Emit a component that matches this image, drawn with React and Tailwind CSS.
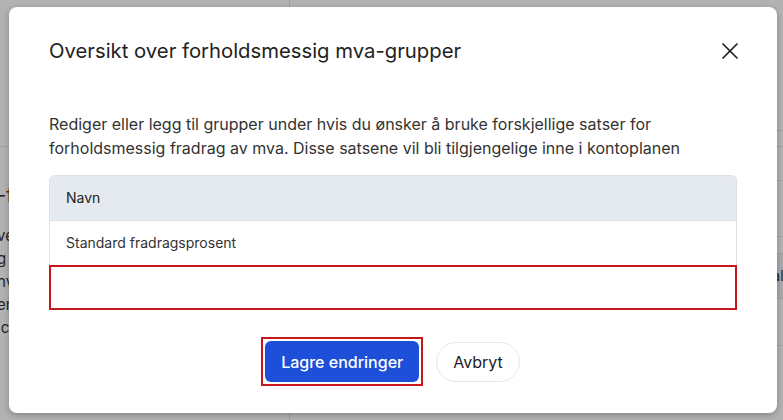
import React from 'react';
import { X } from 'lucide-react';

// Bakgrunnssiden (delvis skjult av modalen)
function BackgroundPage() {
  return (
    <div className="flex h-full text-[#333]">
      <div className="w-[290px] shrink-0 border-r border-gray-200">
        <div className="h-[147px] border-b border-gray-200" />
        <div className="-ml-[3px] pt-[34px] whitespace-nowrap">
          <p className="text-xl leading-7">-fradrag</p>
          <div className="mt-[15px] flex flex-col text-[15px] leading-[23px]">
            <span>ved bruk av</span>
            <span>g satsene</span>
            <span> hvis</span>
            <span>er</span>
            <span>ic</span>
          </div>
        </div>
      </div>
      <div className="flex-1 flex flex-col bg-white">
        <div className="h-[130px]" />
        <div className="h-[16px] border-t border-gray-200" />
        <div className="h-[34px] border-t border-gray-200" />
        <div className="h-[56px] border-t border-gray-200" />
        <div className="h-[17px] border-t border-gray-200" />
        <div className="h-[45px] border-t border-gray-200 bg-[#f1f3f6] flex items-center justify-end text-sm">
          <span className="-mr-[4px]">Detali</span>
        </div>
        <div className="h-[47px] border-t border-gray-200" />
        <div className="flex-1 border-t border-gray-200" />
      </div>
    </div>
  );
}

export default function App() {
  return (
    <div
      className="relative h-[420px] w-full overflow-hidden bg-white"
      style={{ fontFamily: 'Inter, "Noto Sans", sans-serif' }}
    >
      <BackgroundPage />
      <div className="absolute inset-0 bg-black/30" />

      {/* Modal */}
      <div className="absolute left-[9px] top-[7px] w-[768px] rounded-lg bg-white px-10 pt-[30px] pb-[27px] shadow-[0_2px_6px_rgba(0,0,0,0.25)]">
        <div className="flex items-center justify-between">
          <h2 className="text-[20.3px] leading-7 text-[#222]">
            Oversikt over forholdsmessig mva-grupper
          </h2>
          <button className="-mr-[7px] text-[#222]">
            <X size={28} strokeWidth={1.5} />
          </button>
        </div>

        <p className="mt-[47px] text-base leading-6 text-[#333]">
          Rediger eller legg til grupper under hvis du ønsker å bruke forskjellige satser for
          forholdsmessig fradrag av mva. Disse satsene vil bli tilgjengelige inne i kontoplanen
        </p>

        <div className="mt-[15px] rounded-t-md border-x border-t border-[#dcdfe4] overflow-hidden">
          <div className="h-[44px] bg-[#e5eaf1] px-4 flex items-center text-sm text-[#222]">
            Navn
          </div>
          <div className="h-[45px] border-t border-[#dcdfe4] px-4 flex items-center text-sm text-[#333]">
            Standard fradragsprosent
          </div>
        </div>
        <div className="h-[45px] border-2 border-[#c8161d] bg-white" />

        <div className="mt-[27px] flex items-center justify-center gap-[13px] pr-[5px]">
          <div className="border-2 border-[#c8161d] p-[2px]">
            <button className="block h-[41px] rounded-md bg-[#1d4fd8] px-4 text-base font-medium text-white">
              Lagre endringer
            </button>
          </div>
          <button className="h-10 rounded-full border border-gray-200 bg-white px-4 text-base text-[#222]">
            Avbryt
          </button>
        </div>
      </div>
    </div>
  );
}
